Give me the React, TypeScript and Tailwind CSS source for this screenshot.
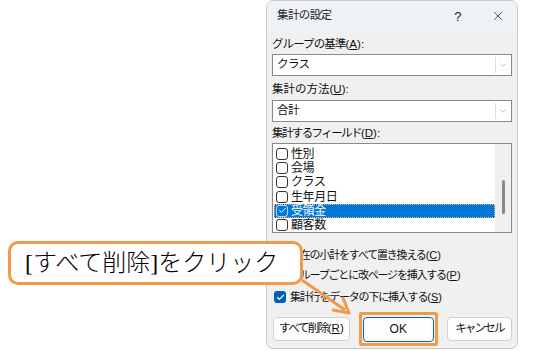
import { Check, ChevronDown, X } from "lucide-react";

const jp = "font-['Liberation_Sans','Noto_Sans_CJK_JP',sans-serif]";

const FIELDS = [
  { name: "性別", checked: false },
  { name: "会場", checked: false },
  { name: "クラス", checked: false },
  { name: "生年月日", checked: false },
  { name: "受領金", checked: true },
  { name: "顧客数", checked: false },
];

function Box({ checked, blue }: { checked: boolean; blue?: boolean }) {
  if (blue) {
    return (
      <span className="flex h-[12px] w-[12px] shrink-0 items-center justify-center rounded-[3px] bg-[#005fb8]">
        <Check size={9} strokeWidth={3} className="text-white" />
      </span>
    );
  }
  return (
    <span
      className={`flex h-[12px] w-[12px] shrink-0 items-center justify-center rounded-[3px] border ${
        checked ? "border-white/70" : "border-[#333] bg-white"
      }`}
    >
      {checked && <Check size={9} strokeWidth={2.5} className="text-white" />}
    </span>
  );
}

function Acc({ u }: { u: string }) {
  return (
    <span className="tracking-normal">
      (<span className="underline">{u}</span>)
    </span>
  );
}

function Combo({ value }: { value: string }) {
  return (
    <div className="flex h-[22px] items-stretch border border-[#8a8a8a] bg-white">
      <div className="flex flex-1 items-center pl-[4px] text-[11.5px] leading-none tracking-[-0.6px] text-[#111]">{value}</div>
      <div className="my-[2px] mr-[1px] flex w-[15px] items-center justify-center border-l border-[#dcdcdc]">
        <ChevronDown size={10} strokeWidth={1.2} className="text-[#777]" />
      </div>
    </div>
  );
}

function Label({ text, u, track }: { text: string; u: string; track: string }) {
  return (
    <div className="flex h-[16px] items-center text-[11.5px] leading-none text-[#111]">
      <span>
        <span className={track}>{text}</span>
        <Acc u={u} />:
      </span>
    </div>
  );
}

function Option({ text, u, checked, blue }: { text: string; u: string; checked: boolean; blue?: boolean }) {
  return (
    <div className="flex h-[20px] items-center gap-[4px] pl-[2px] text-[11px] leading-none text-[#111]">
      <Box checked={checked} blue={blue} />
      <span>
        <span className="tracking-[-1.2px]">{text}</span>
        <Acc u={u} />
      </span>
    </div>
  );
}

export default function App() {
  return (
    <div className={`relative h-[351px] w-[539px] overflow-hidden bg-white ${jp}`}>
      <div className="ml-[266px] flex h-[349px] w-[252px] flex-col overflow-hidden rounded-[7px] border border-[#c9c9c9] bg-[#f0f0f0]">
        <div className="flex h-[30px] items-center bg-[#eef1f6] pl-[10px] pr-[12px] text-[11.5px] leading-none tracking-[-0.6px] text-[#222]">
          <span className="flex-1">集計の設定</span>
          <span className="mr-[30px] text-[13px]">?</span>
          <X size={14} strokeWidth={1.3} className="text-[#222]" />
        </div>
        <div className="flex flex-col px-[5px] pt-[6px]">
          <Label text="グループの基準" u="A" track="tracking-[-0.9px]" />
          <div className="mt-[1px]">
            <Combo value="クラス" />
          </div>
          <div className="mt-[6px]">
            <Label text="集計の方法" u="U" track="tracking-[0px]" />
          </div>
          <div className="mt-[2px]">
            <Combo value="合計" />
          </div>
          <div className="mt-[4px]">
            <Label text="集計するフィールド" u="D" track="tracking-[-1.6px]" />
          </div>
          <div className="mt-[1px] flex h-[90px] border border-[#8a8a8a] bg-white">
            <div className="flex flex-1 flex-col pl-[1px] pt-[3px]">
              {FIELDS.map((f) => (
                <div
                  key={f.name}
                  className={`flex h-[14.3px] items-center gap-[3px] pl-[1px] text-[12px] leading-none tracking-[-0.4px] ${
                    f.checked
                      ? "border border-dotted border-[#ffb070] bg-[#0078d7] text-white"
                      : "border border-transparent text-[#111]"
                  }`}
                >
                  <Box checked={f.checked} />
                  <span>{f.name}</span>
                </div>
              ))}
            </div>
            <div className="flex w-[16px] justify-center bg-[#f0f0f0] pt-[36px]">
              <div className="h-[34px] w-[3px] rounded-full bg-[#8a8a8a]" />
            </div>
          </div>
          <div className="mt-[12px]">
            <Option text="現在の小計をすべて置き換える" u="C" checked={false} />
          </div>
          <Option text="グループごとに改ページを挿入する" u="P" checked={false} />
          <div className="mt-[2px]">
            <Option text="集計行をデータの下に挿入する" u="S" checked blue />
          </div>
          <div className="mt-[5px] flex items-center gap-[9px] pl-[1px]">
            <button className="h-[24px] w-[80px] whitespace-nowrap rounded-[4px] border border-[#d0d0d0] bg-[#fdfdfd] text-[11.5px] leading-none text-[#111]">
              <span className="tracking-[-1.5px]">すべて削除</span>
              <Acc u="R" />
            </button>
            <div className="rounded-[2px] border-[3px] border-[#f2994a] p-[1px]">
              <button className="h-[25px] w-[71px] rounded-[4px] border border-[#0067c0] bg-[#fdfdfd] text-[12px] leading-none text-[#111]">
                OK
              </button>
            </div>
            <button className="h-[24px] w-[68px] whitespace-nowrap rounded-[4px] border border-[#d0d0d0] bg-[#fdfdfd] text-[11.5px] leading-none tracking-[-1.8px] text-[#111]">
              キャンセル
            </button>
          </div>
        </div>
      </div>

      <div className="absolute left-[8px] top-[241px] flex h-[44px] w-[295px] items-center rounded-[10px] border-[3px] border-[#f2994a] bg-white pl-[14px] font-['Liberation_Serif','Noto_Sans_CJK_JP',serif] text-[24px] font-light leading-none text-black">
        [すべて削除]をクリック
      </div>
      <svg className="absolute left-0 top-0" width="539" height="351" viewBox="0 0 539 351">
        <line x1="302" y1="280" x2="345" y2="310" stroke="#f2994a" strokeWidth="3" />
        <path d="M349 313 L333 310 M349 313 L343 298" stroke="#f2994a" strokeWidth="3" fill="none" strokeLinecap="round" />
      </svg>
    </div>
  );
}
